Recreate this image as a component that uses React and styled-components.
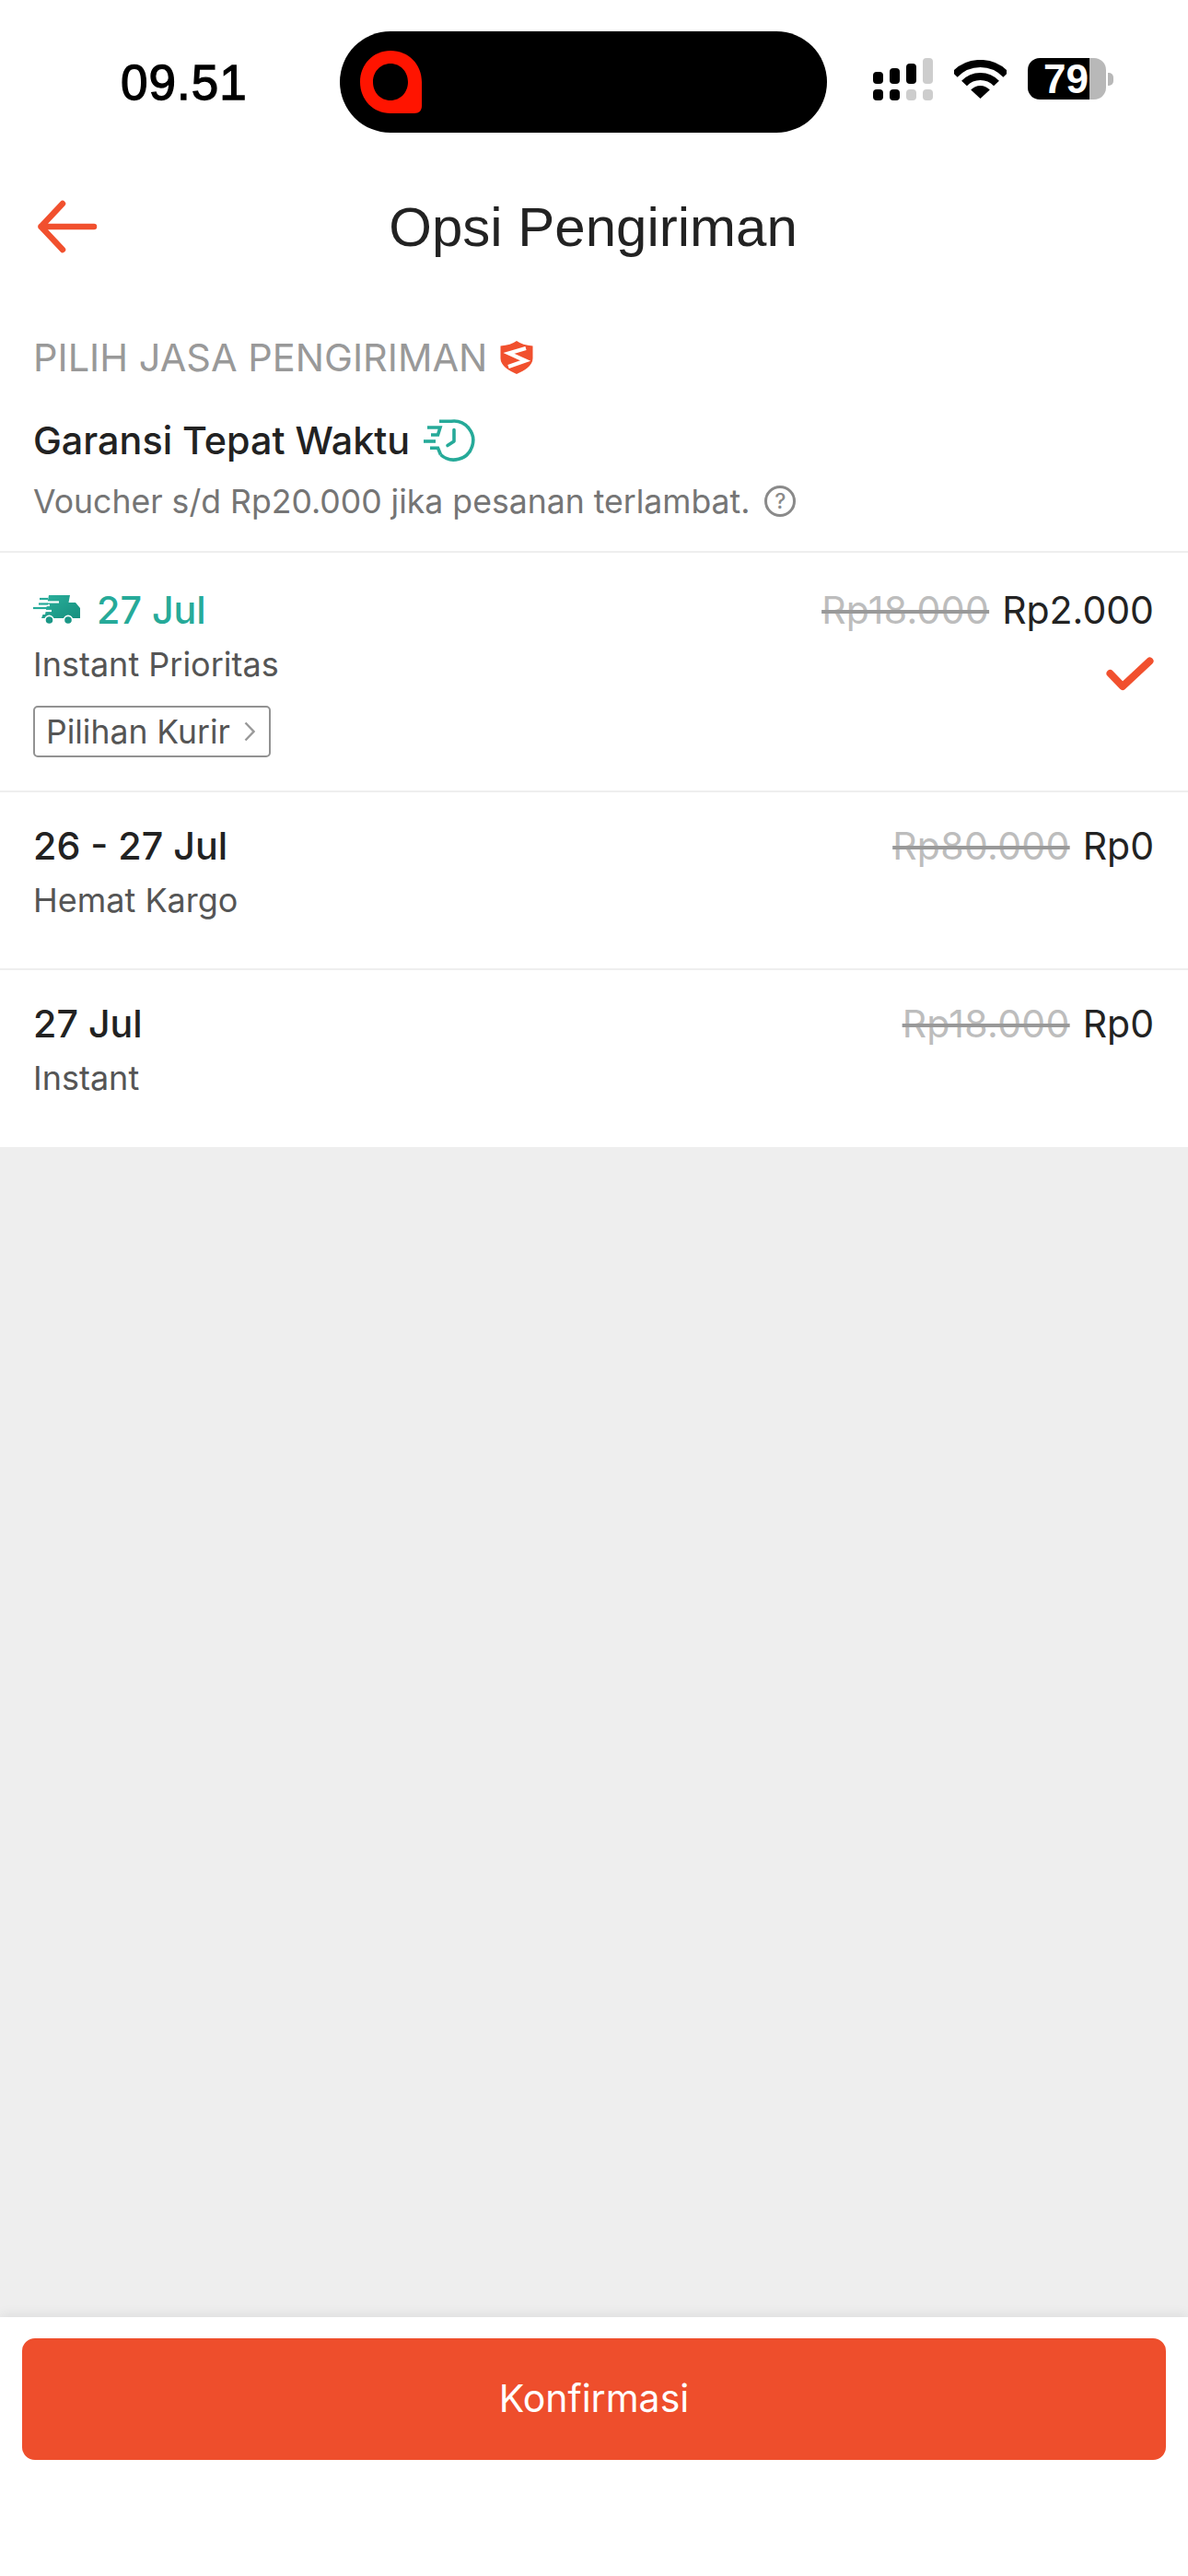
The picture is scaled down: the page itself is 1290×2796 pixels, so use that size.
import React from "react";
import styled, { createGlobalStyle } from "styled-components";

const orange = "#f1502e";
const teal = "#26aa99";

const Global = createGlobalStyle`
  html, body { margin: 0; padding: 0; background: #fff; }
  * { box-sizing: border-box; }
`;

const Page = styled.div`
  width: 1290px;
  height: 2796px;
  display: flex;
  flex-direction: column;
  background: #fff;
  font-family: "Inter", "Liberation Sans", sans-serif;
  overflow: hidden;
`;

const StatusBar = styled.div`
  height: 178px;
  padding-top: 34px;
  display: flex;
  align-items: flex-start;
  flex: none;
`;

const TimeSlot = styled.div`
  width: 369px;
  height: 110px;
  display: flex;
  align-items: center;
  padding-left: 131px;
  font-family: "Liberation Sans", Arial, sans-serif;
  font-size: 53px;
  letter-spacing: 1px;
  color: #000;
  -webkit-text-stroke: 1.3px #000;
`;

const Island = styled.div`
  width: 529px;
  height: 110px;
  border-radius: 55px;
  background: #000;
  display: flex;
  align-items: center;
  padding-left: 22px;
`;

const StatusIcons = styled.div`
  height: 110px;
  display: flex;
  align-items: flex-start;
  padding: 29px 0 0 50px;
`;

const WifiSlot = styled.div`
  margin: 2px 0 0 23px;
  height: 42px;
  display: flex;
`;

const Battery = styled.div`
  position: relative;
  width: 85px;
  height: 45px;
  margin-left: 23px;
  border-radius: 13px;
  background: linear-gradient(90deg, #000 0, #000 67px, #b8b8b8 67px);
  color: #fff;
  font-family: "Liberation Sans", Arial, sans-serif;
  font-weight: 700;
  font-size: 44px;
  line-height: 45px;
  padding-left: 17px;
  &::after {
    content: "";
    position: absolute;
    left: 87px;
    top: 16px;
    width: 6px;
    height: 14px;
    border-radius: 0 5px 5px 0;
    background: #b8b8b8;
  }
`;

const Header = styled.div`
  position: relative;
  height: 134px;
  flex: none;
  display: flex;
  align-items: center;
  justify-content: center;
  padding: 2px 2px 0 0;
`;

const BackButton = styled.div`
  position: absolute;
  left: 40px;
  top: 38px;
  width: 68px;
  height: 60px;
  display: flex;
`;

const Title = styled.div`
  font-family: "Liberation Sans", Arial, sans-serif;
  font-size: 60px;
  color: #222;
`;

const Intro = styled.div`
  height: 288px;
  flex: none;
  padding: 51px 36px 0;
  border-bottom: 2px solid #eeeeee;
`;

const SectionLabel = styled.div`
  height: 50px;
  display: flex;
  align-items: center;
  gap: 14px;
  font-size: 41.5px;
  color: #999;
`;

const Guarantee = styled.div`
  height: 50px;
  margin-top: 40px;
  display: flex;
  align-items: center;
  gap: 15px;
  font-size: 41.3px;
  font-weight: 450;
  color: #222;
`;

const Voucher = styled.div`
  height: 46px;
  margin-top: 18px;
  display: flex;
  align-items: center;
  gap: 16px;
  font-size: 35.6px;
  color: #757575;
`;

const Help = styled.span`
  width: 34px;
  height: 34px;
  border: 3px solid #8a8a8a;
  border-radius: 50%;
  display: flex;
  align-items: center;
  justify-content: center;
  font-size: 23px;
  font-weight: 500;
  color: #8a8a8a;
`;

const Row = styled.div`
  height: ${(p) => p.$height}px;
  flex: none;
  padding: ${(p) => p.$top}px 37px 0 36px;
  display: flex;
  justify-content: space-between;
  border-bottom: ${(p) => (p.$last ? "none" : "2px solid #eeeeee")};
`;

const RowLeft = styled.div`
  display: flex;
  flex-direction: column;
`;

const RowRight = styled.div`
  display: flex;
  flex-direction: column;
  align-items: flex-end;
`;

const DateLine = styled.div`
  height: 50px;
  display: flex;
  align-items: center;
  gap: 18px;
  font-size: 41.2px;
  font-weight: 450;
  color: ${(p) => (p.$accent ? teal : "#222")};
`;

const ServiceName = styled.div`
  height: 50px;
  margin-top: 9px;
  display: flex;
  align-items: center;
  font-size: 36px;
  color: #555;
`;

const CourierTag = styled.div`
  height: 56px;
  width: 258px;
  margin-top: 20px;
  padding: 0 15px 0 12px;
  display: flex;
  align-items: center;
  justify-content: space-between;
  border: 2px solid #929292;
  border-radius: 5px;
  font-size: 35.5px;
  color: #555;
`;

const PriceLine = styled.div`
  height: 50px;
  display: flex;
  align-items: center;
  gap: 14px;
  font-size: 41px;
  color: #222;
`;

const OldPrice = styled.span`
  color: #bdbdbd;
  letter-spacing: 0.3px;
  text-decoration: line-through;
  text-decoration-color: #999;
`;

const CheckMark = styled.div`
  margin-top: 26px;
  display: flex;
`;

const Filler = styled.div`
  flex: 1;
  background: #eeeeee;
`;

const Footer = styled.div`
  height: 281px;
  flex: none;
  padding: 23px 24px 0;
  background: #fff;
  box-shadow: 0 -3px 12px rgba(0, 0, 0, 0.07);
  position: relative;
`;

const ConfirmButton = styled.div`
  height: 132px;
  padding-bottom: 2px;
  border-radius: 14px;
  background: #ee4e2c;
  color: #fff;
  font-size: 41px;
  display: flex;
  align-items: center;
  justify-content: center;
`;

const AppMark = () => (
  <svg width="67" height="68" viewBox="0 0 67 68">
    <path
      fillRule="evenodd"
      fill="#ff1400"
      d="M33 0C53 0 67 15 67 34V60C67 65 64 68 59 68H33C14 68 0 53 0 34C0 15 14 0 33 0ZM33 14C22 14 14 23 14 34C14 45 22 54 33 54C44 54 52 45 52 34C52 23 44 14 33 14Z"
    />
  </svg>
);

const Signal = () => {
  const k = "#000";
  const g = "#cdcdcd";
  return (
    <svg width="65" height="46" viewBox="0 0 65 46">
      <rect x="0" y="15" width="11" height="13" rx="4" fill={k} />
      <rect x="18" y="11" width="11" height="17" rx="4" fill={k} />
      <rect x="36" y="6" width="11" height="22" rx="4" fill={k} />
      <rect x="54" y="0" width="11" height="28" rx="4" fill={g} />
      <rect x="0" y="34" width="11" height="12" rx="4" fill={k} />
      <rect x="18" y="34" width="11" height="12" rx="4" fill={k} />
      <rect x="36" y="34" width="11" height="12" rx="4" fill={g} />
      <rect x="54" y="34" width="11" height="12" rx="4" fill={g} />
    </svg>
  );
};

const Wifi = () => (
  <svg width="57" height="42" viewBox="0 0 57 42">
    <path d="M0.7 16A38 38 0 0 1 56.3 16" fill="none" stroke="#000" strokeWidth="8" />
    <path d="M11 25.6A24 24 0 0 1 46 25.6" fill="none" stroke="#000" strokeWidth="8" />
    <path d="M28.5 42L18.2 32.5A14 14 0 0 1 38.8 32.5Z" fill="#000" />
  </svg>
);

const BackArrow = () => (
  <svg width="68" height="60" viewBox="0 0 68 60">
    <path
      d="M28 5L4.500 30L28 55M4.500 30H62"
      fill="none"
      stroke={orange}
      strokeWidth="6.500"
      strokeLinecap="round"
      strokeLinejoin="round"
    />
  </svg>
);

const Shield = () => (
  <svg width="36" height="36" viewBox="0 0 36 36">
    <path
      d="M18 0C22 3 28 5 35.500 5.500V19C35.500 27 26 32.500 18 36C10 32.500 0.500 27 0.500 19V5.500C8 5 14 3 18 0Z"
      fill={orange}
    />
    <path d="M28 8L9.500 13.500L27.500 21.500L9 28" fill="none" stroke="#fff" strokeWidth="4.200" />
  </svg>
);

const FastClock = () => (
  <svg width="56" height="46" viewBox="0 0 56 46">
    <g fill="none" stroke={teal} strokeWidth="3.600">
      <path d="M17 2.200H30A21 21 0 1 1 18.500 38.500" />
      <path d="M18.500 38.500L15.500 31.300H7" />
      <path d="M4 9H18L15.500 17H8" />
      <path d="M0 24H13" />
      <path d="M33 11.500V24L26 28.500" strokeLinecap="round" strokeLinejoin="round" />
    </g>
  </svg>
);

const Truck = () => (
  <svg width="51" height="32" viewBox="0 0 51 32">
    <defs>
      <linearGradient id="truckFill" x1="0" y1="0" x2="1" y2="1">
        <stop offset="0" stopColor="#2bb09c" />
        <stop offset="1" stopColor="#168f7e" />
      </linearGradient>
    </defs>
    <path d="M17 0H40L38.500 8H46L51 14V25H9L10.500 21H13L17 0Z" fill="url(#truckFill)" />
    <g stroke="#fff" strokeWidth="2.200">
      <path d="M10 7.500H28" />
      <path d="M2 17H20" />
      <path d="M8 11H18" />
    </g>
    <g stroke={teal} strokeWidth="2.200">
      <path d="M7 4H16" />
      <path d="M0 14H18" />
      <path d="M6 9.500H16" />
    </g>
    <circle cx="17.500" cy="27" r="4.600" fill="#1a9786" stroke="#fff" strokeWidth="1.600" />
    <circle cx="38" cy="27" r="4.600" fill="#1a9786" stroke="#fff" strokeWidth="1.600" />
  </svg>
);

const Chevron = () => (
  <svg width="12" height="22" viewBox="0 0 12 22">
    <path d="M1.500 1.500L10.500 11L1.500 20.500" fill="none" stroke="#999" strokeWidth="2.400" />
  </svg>
);

const Check = () => (
  <svg width="52" height="37" viewBox="0 0 52 37">
    <path
      d="M4.500 18L18 32L47.500 4.500"
      fill="none"
      stroke={orange}
      strokeWidth="8"
      strokeLinecap="round"
      strokeLinejoin="round"
    />
  </svg>
);

export default function App() {
  return (
    <Page>
      <Global />
      <StatusBar>
        <TimeSlot>09.51</TimeSlot>
        <Island>
          <AppMark />
        </Island>
        <StatusIcons>
          <Signal />
          <WifiSlot>
            <Wifi />
          </WifiSlot>
          <Battery>79</Battery>
        </StatusIcons>
      </StatusBar>
      <Header>
        <BackButton>
          <BackArrow />
        </BackButton>
        <Title>Opsi Pengiriman</Title>
      </Header>
      <Intro>
        <SectionLabel>
          PILIH JASA PENGIRIMAN <Shield />
        </SectionLabel>
        <Guarantee>
          Garansi Tepat Waktu <FastClock />
        </Guarantee>
        <Voucher>
          Voucher s/d Rp20.000 jika pesanan terlambat. <Help>?</Help>
        </Voucher>
      </Intro>
      <Row $height={260} $top={37}>
        <RowLeft>
          <DateLine $accent>
            <Truck />
            27 Jul
          </DateLine>
          <ServiceName>Instant Prioritas</ServiceName>
          <CourierTag>
            Pilihan Kurir
            <Chevron />
          </CourierTag>
        </RowLeft>
        <RowRight>
          <PriceLine>
            <OldPrice>Rp18.000</OldPrice>
            <span>Rp2.000</span>
          </PriceLine>
          <CheckMark>
            <Check />
          </CheckMark>
        </RowRight>
      </Row>
      <Row $height={193} $top={33}>
        <RowLeft>
          <DateLine>26 - 27 Jul</DateLine>
          <ServiceName>Hemat Kargo</ServiceName>
        </RowLeft>
        <RowRight>
          <PriceLine>
            <OldPrice>Rp80.000</OldPrice>
            <span>Rp0</span>
          </PriceLine>
        </RowRight>
      </Row>
      <Row $height={192} $top={33} $last>
        <RowLeft>
          <DateLine>27 Jul</DateLine>
          <ServiceName>Instant</ServiceName>
        </RowLeft>
        <RowRight>
          <PriceLine>
            <OldPrice>Rp18.000</OldPrice>
            <span>Rp0</span>
          </PriceLine>
        </RowRight>
      </Row>
      <Filler />
      <Footer>
        <ConfirmButton>Konfirmasi</ConfirmButton>
      </Footer>
    </Page>
  );
}
